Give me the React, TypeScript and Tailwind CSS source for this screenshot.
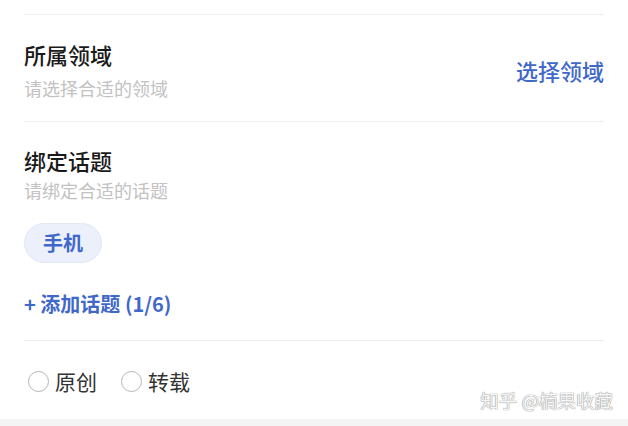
import React from "react";

const font = { fontFamily: '"Noto Sans CJK SC", "Noto Sans", sans-serif' };

function Radio({ label }: { label: string }) {
  return (
    <label className="flex items-center gap-[6px]">
      <span className="block h-[21px] w-[21px] rounded-full border-[1.5px] border-[#b5b5b5] bg-white" />
      <span className="text-[21px] leading-[28px] text-[#333]">{label}</span>
    </label>
  );
}

export default function App() {
  return (
    <div className="relative h-[426px] w-[628px] overflow-hidden bg-white" style={font}>
      <div className="px-6 pt-[14px]">
        <div className="h-px bg-[#eeeeee]" />

        {/* 所属领域 */}
        <div className="flex items-center justify-between pt-[25px] pb-[21px]">
          <div>
            <div className="text-[22px] font-medium leading-[28px] text-[#1a1a1a]">所属领域</div>
            <div className="mt-[8px] text-[18px] leading-[24px] text-[#c2c2c2]">请选择合适的领域</div>
          </div>
          <button className="text-[22px] font-medium leading-[28px] text-[#3f68c9]">选择领域</button>
        </div>
        <div className="h-px bg-[#eeeeee]" />

        {/* 绑定话题 */}
        <div className="pt-[24px] pb-[23px]">
          <div className="text-[22px] font-medium leading-[28px] text-[#1a1a1a]">绑定话题</div>
          <div className="mt-[4px] text-[18px] leading-[24px] text-[#c2c2c2]">请绑定合适的话题</div>
          <div className="mt-[21px] flex">
            <span className="flex h-[40px] w-[78px] items-center justify-center rounded-full border border-[#e2e8f5] bg-[#ebf0fa] text-[20px] font-semibold text-[#3f68c9]">
              手机
            </span>
          </div>
          <div className="mt-[28px] text-[20px] font-bold leading-[26px] text-[#3f68c9]">+ 添加话题 (1/6)</div>
        </div>
        <div className="h-px bg-[#eeeeee]" />

        <div className="flex items-center gap-[24px] pl-[4px] pt-[26px]">
          <Radio label="原创" />
          <Radio label="转载" />
        </div>
      </div>
      <div className="absolute right-[15px] top-[388px] text-[18.5px] leading-[24px] text-[#f7f7f7] [text-shadow:0_0_1px_#8a8a8a,0_0_1px_#8a8a8a]">
        知乎 @楠果收藏
      </div>
      <div className="absolute bottom-0 left-0 h-[7px] w-full bg-[#f4f4f4]" />
    </div>
  );
}
